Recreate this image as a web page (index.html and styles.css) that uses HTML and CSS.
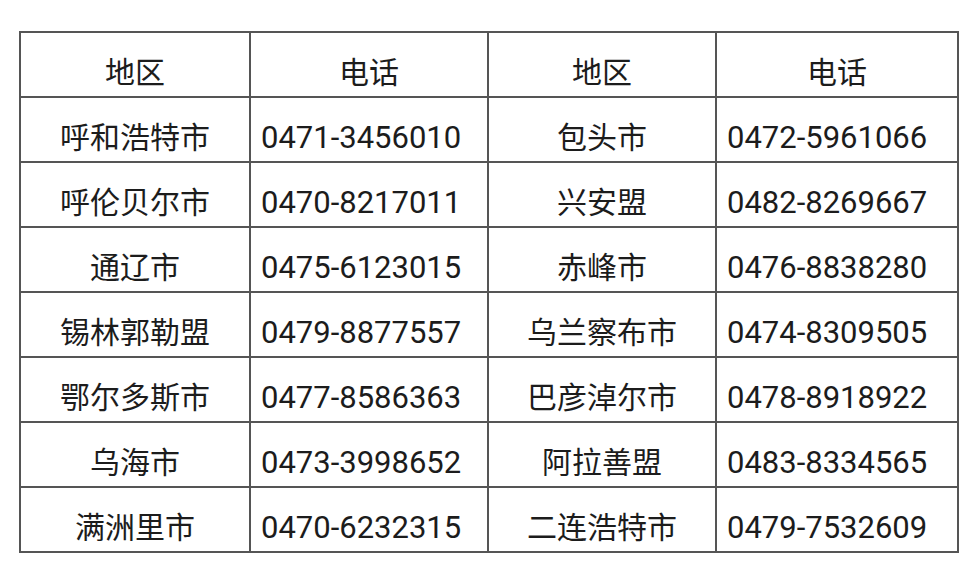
FILE: index.html
```html
<!DOCTYPE html>
<html lang="zh-CN">
<head>
<meta charset="utf-8">
<title>电话</title>
<link rel="stylesheet" href="styles.css">
</head>
<body>
<table class="phones">
  <colgroup>
    <col class="c1"><col class="c2"><col class="c3"><col class="c4">
  </colgroup>
  <thead>
    <tr><th>地区</th><th>电话</th><th>地区</th><th>电话</th></tr>
  </thead>
  <tbody>
    <tr><td>呼和浩特市</td><td class="num">0471-3456010</td><td>包头市</td><td class="num">0472-5961066</td></tr>
    <tr><td>呼伦贝尔市</td><td class="num">0470-8217011</td><td>兴安盟</td><td class="num">0482-8269667</td></tr>
    <tr><td>通辽市</td><td class="num">0475-6123015</td><td>赤峰市</td><td class="num">0476-8838280</td></tr>
    <tr><td>锡林郭勒盟</td><td class="num">0479-8877557</td><td>乌兰察布市</td><td class="num">0474-8309505</td></tr>
    <tr><td>鄂尔多斯市</td><td class="num">0477-8586363</td><td>巴彦淖尔市</td><td class="num">0478-8918922</td></tr>
    <tr><td>乌海市</td><td class="num">0473-3998652</td><td>阿拉善盟</td><td class="num">0483-8334565</td></tr>
    <tr><td>满洲里市</td><td class="num">0470-6232315</td><td>二连浩特市</td><td class="num">0479-7532609</td></tr>
  </tbody>
</table>
</body>
</html>
```
FILE: styles.css
```css
html, body {
  margin: 0;
  padding: 0;
  background: #ffffff;
}
body {
  padding: 31px 0 0 19px;
  font-family: "Noto Sans CJK SC", "Noto Sans", sans-serif;
  color: #1c1c1c;
}
.phones {
  border-collapse: collapse;
  table-layout: fixed;
  width: 938px;
}
.c1 { width: 230px; }
.c2 { width: 238px; }
.c3 { width: 228px; }
.c4 { width: 242px; }
.phones th,
.phones td {
  border: 2px solid #555555;
  height: 65px;
  box-sizing: border-box;
  padding: 10px 0 0 0;
  text-align: center;
  vertical-align: middle;
  font-size: 30px;
  font-weight: 400;
  line-height: 1;
  white-space: nowrap;
}
.phones .num {
  font-family: Roboto, "Noto Sans", sans-serif;
  font-size: 31px;
  text-align: left;
  padding: 16px 0 0 10px;
}
```
